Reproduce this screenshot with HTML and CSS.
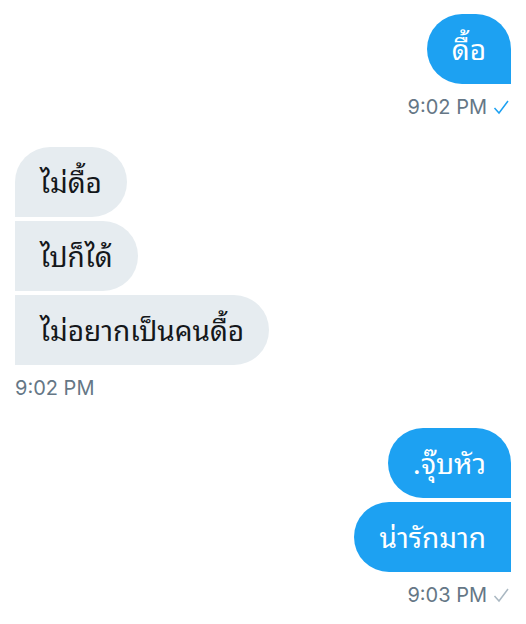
FILE: index.html
```html
<!DOCTYPE html>
<html lang="th">
  <head>
    <meta charset="utf-8">
    <meta name="viewport" content="width=device-width, initial-scale=1">
    <title>Messages</title>
    <link rel="stylesheet" href="styles.css">
  </head>
  <body>
    <main class="chat">
      <section class="group sent">
        <p class="bubble">ดื้อ</p>
        <div class="meta">
          <time>9:02 PM</time>
          <svg class="check" viewBox="0 0 18 16" aria-hidden="true"><path d="M1.5 8 6 13 15 1"/></svg>
        </div>
      </section>
      <section class="group received">
        <p class="bubble">ไม่ดื้อ</p>
        <p class="bubble">ไปก็ได้</p>
        <p class="bubble">ไม่อยากเป็นคนดื้อ</p>
        <div class="meta"><time>9:02 PM</time></div>
      </section>
      <section class="group sent">
        <p class="bubble">.จุ๊บหัว</p>
        <p class="bubble">น่ารักมาก</p>
        <div class="meta">
          <time>9:03 PM</time>
          <svg class="check pending" viewBox="0 0 18 16" aria-hidden="true"><path d="M1.5 8 6 13 15 1"/></svg>
        </div>
      </section>
    </main>
  </body>
</html>
```

FILE: styles.css
```css
body { margin: 0; background: #fff; color: #14171a; font-family: Inter, "Noto Sans Thai Looped", Loma, Waree, Garuda, "Noto Sans", sans-serif; }
.chat { display: flex; flex-direction: column; gap: 27px; padding: 14px 15px; }
.group { display: flex; flex-direction: column; align-items: flex-start; gap: 4px; }
.bubble { box-sizing: border-box; height: 70px; margin: 0; padding: 0 25px; font-size: 28px; line-height: 72px; white-space: nowrap; }
.received .bubble { background: #e6ecf0; border-radius: 0 35px 35px 0; }
.received .bubble:first-child { border-top-left-radius: 35px; }
.sent { align-items: flex-end; }
.sent .bubble { background: #1da1f2; color: #fff; border-radius: 35px 0 0 35px; }
.sent .bubble:first-child { border-top-right-radius: 35px; }
.meta { display: flex; align-items: center; gap: 6px; padding-top: 7px; color: #657786; font-size: 20px; line-height: 25px; }
.check { width: 18px; height: 16px; fill: none; stroke: #1da1f2; stroke-width: 1.5; }
.pending { stroke: #aab8c2; }
```
